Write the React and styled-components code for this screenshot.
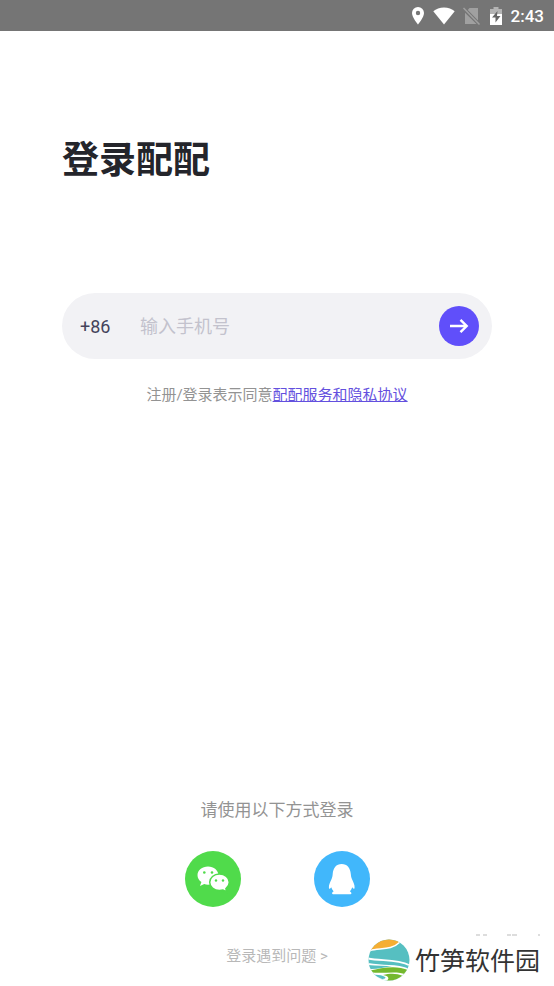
import { useState } from 'react'
import styled, { createGlobalStyle } from 'styled-components'

const GlobalStyle = createGlobalStyle`
  * {
    box-sizing: border-box;
  }
  body {
    margin: 0;
    background: #fff;
    font-family: Roboto, 'Noto Sans CJK SC', sans-serif;
  }
`

function StatusIcons() {
  return (
    <>
      <svg width='14' height='20' viewBox='0 0 14 20'>
        <path fill='#fff' fillRule='evenodd' d='M7 1a6 6 0 0 0-6 6c0 4.500 6 11.500 6 11.500S13 11.500 13 7a6 6 0 0 0-6-6zm0 8.200a2.200 2.200 0 1 1 0-4.400 2.200 2.200 0 0 1 0 4.400z' />
      </svg>
      <svg width='22' height='20' viewBox='0 0 22 20'>
        <path fill='#fff' d='M11 18.500L0.300 5.200C3 3 6.800 1.500 11 1.500s8 1.500 10.700 3.700z' />
      </svg>
      <svg width='18' height='20' viewBox='0 0 18 20'>
        <path fill='#a0a0a0' d='M6.500 2H15v12.500L4.800 4zM2 6.800L13.500 18H2z' />
        <path stroke='#a0a0a0' strokeWidth='1.500' d='M0.500 2l16 16.500' />
      </svg>
      <svg width='14' height='20' viewBox='0 0 14 20'>
        <path fill='#b4b4b4' d='M4.500 1h5v2H13v5H1V3h3.500z' />
        <path fill='#fff' d='M1 8h12v11H1z' />
        <path fill='#666' d='M8.500 5l-5.500 6.500h3.500v5l5-6.500H8z' />
      </svg>
    </>
  )
}

function ArrowIcon() {
  return (
    <svg width='20' height='16' viewBox='0 0 20 16' fill='none' stroke='#fff' strokeWidth='2.4'>
      <path d='M1 8h17M11.500 1.800L17.700 8l-6.200 6.200' />
    </svg>
  )
}

function WechatIcon() {
  return (
    <svg width='56' height='56' viewBox='0 0 56 56'>
      <path fill='#fff' d='M23 15.500c-5.900 0-10.500 3.900-10.500 8.700 0 2.800 1.500 5.200 3.900 6.800L15 35l4.200-1.900c1.200.4 2.500.6 3.800.6 5.800 0 10.500-4.100 10.500-9.200s-4.700-9-10.500-9z' />
      <path fill='#fff' stroke='#50db4b' strokeWidth='1.500' d='M34.400 23.100c-5.500 0-9.700 3.700-9.700 8.200s4.200 8.200 9.700 8.200c1.300 0 2.500-.2 3.600-.5l3.700 2-.8-3.500c2.100-1.500 3.400-3.700 3.400-6.200 0-4.500-4.400-8.200-9.900-8.200z' />
      <g fill='#50db4b'>
        <circle cx='19.300' cy='21.500' r='1.300' />
        <circle cx='27' cy='21.500' r='1.300' />
        <circle cx='31' cy='29.500' r='1.200' />
        <circle cx='38' cy='29.500' r='1.200' />
      </g>
    </svg>
  )
}

function QQIcon() {
  return (
    <svg width='56' height='56' viewBox='0 0 56 56'>
      <path fill='#fff' d='M27.700 13c-5.600 0-8.500 4-9 10-.2 2-.4 3.400-1.100 5-1.400 3-2.900 5.800-2.700 8.800.1 1.500.9 1.400 2.300-.6.6 1.700 1.400 3 2.500 4.200-1.100.4-1.600 1-1.600 1.800 0 .7.500 1 1.500 1h16.300c1 0 1.500-.3 1.500-1 0-.8-.5-1.400-1.600-1.800 1.100-1.200 1.900-2.500 2.500-4.200 1.400 2 2.200 2.100 2.300.6.200-3-1.300-5.800-2.700-8.800-.7-1.600-.9-3-1.100-5-.5-6-3.500-10-9.100-10z' />
    </svg>
  )
}

function BambooLogo() {
  return (
    <svg width='42' height='42' viewBox='0 0 42 42'>
      <defs>
        <clipPath id='disc'>
          <circle cx='21' cy='21' r='20.500' />
        </clipPath>
      </defs>
      <g clipPath='url(#disc)'>
        <path fill='#56bfc1' d='M0 0h42v42H0z' />
        <path fill='#f5ae33' stroke='#fff' strokeWidth='1.500' d='M2 11.500C11 8.500 23 12 32 3V-3H0z' />
        <path fill='none' stroke='#fff' strokeWidth='1.800' d='M0 19.500C13 22.500 28 19.500 42 26.500' />
        <path fill='#fff' d='M0 24C14 27 28 24 42 30v12H0z' />
        <path fill='#56bfc1' d='M0 26c9 1 17 .5 24 1.500-8 .5-15 3-22.500 2.500z' />
        <path fill='#74b82e' d='M2 31.500C14 29 28 25.500 41 31.500l-2 4.500C29 31 16 35 4 33.500z' />
        <path fill='#74b82e' d='M15 36c8-2 14-1.500 20 1l-4 5H18c4-2 3-5-3-6z' />
        <path fill='#56bfc1' d='M5 36c4-.5 9 0 12 2 1.500 1-1 2-3 2z' />
      </g>
    </svg>
  )
}

function App() {
  const [phone, setPhone] = useState('')

  const handleSubmit = (event) => {
    event.preventDefault()
  }

  return (
    <Page>
      <GlobalStyle />
      <StatusBar>
        <StatusIcons />
        <Clock>2:43</Clock>
      </StatusBar>
      <Main>
        <Title>登录配配</Title>
        <PhoneForm onSubmit={handleSubmit}>
          <AreaCode htmlFor='phone'>+86</AreaCode>
          <PhoneInput
            id='phone'
            type='tel'
            placeholder='输入手机号'
            value={phone}
            onChange={(event) => setPhone(event.target.value)}
          />
          <SubmitButton type='submit' aria-label='登录'>
            <ArrowIcon />
          </SubmitButton>
        </PhoneForm>
        <Terms>
          注册/登录表示同意<TermsLink href='#terms'>配配服务和隐私协议</TermsLink>
        </Terms>
      </Main>
      <Footer>
        <FooterText>请使用以下方式登录</FooterText>
        <Socials>
          <SocialButton type='button' aria-label='微信' $color='#50db4b'>
            <WechatIcon />
          </SocialButton>
          <SocialButton type='button' aria-label='QQ' $color='#41b7fb'>
            <QQIcon />
          </SocialButton>
        </Socials>
        <HelpLink href='#help'>登录遇到问题 &gt;</HelpLink>
      </Footer>
      <Watermark>
        <BambooLogo />
        <WatermarkName>竹笋软件园</WatermarkName>
        <WatermarkTicks width='64' height='2' viewBox='0 0 64 2'>
          <path stroke='#bbb' d='M0 1h4M7 1h4M31 1h4M36 1h5M62 1h2' />
        </WatermarkTicks>
      </Watermark>
    </Page>
  )
}

export default App

const Page = styled.div`
  position: relative;
  display: flex;
  flex-direction: column;
  min-height: 100vh;
`

const StatusBar = styled.header`
  display: flex;
  align-items: center;
  justify-content: flex-end;
  gap: 8px;
  height: 31px;
  padding: 0 10px;
  background: #757575;
`

const Clock = styled.span`
  color: #fff;
  font-size: 17px;
  font-weight: 500;
  line-height: 20px;
`

const Main = styled.main`
  flex: 1;
  padding: 102px 62px 0;
`

const Title = styled.h1`
  margin: 0 0 104px;
  color: #24252b;
  font-size: 37px;
  font-weight: 700;
  line-height: 56px;
`

const PhoneForm = styled.form`
  display: flex;
  align-items: center;
  height: 66px;
  padding: 0 13px 0 18px;
  border-radius: 33px;
  background: #f2f2f5;
`

const AreaCode = styled.label`
  width: 60px;
  padding-top: 2px;
  color: #45435b;
  font-size: 18px;
  line-height: 24px;
`

const PhoneInput = styled.input`
  flex: 1;
  min-width: 0;
  padding: 2px 0 0;
  border: 0;
  outline: 0;
  background: transparent;
  color: #45435b;
  font-family: inherit;
  font-size: 18px;
  line-height: 24px;

  &::placeholder {
    color: #c3c2cd;
  }
`

const SubmitButton = styled.button`
  display: flex;
  align-items: center;
  justify-content: center;
  width: 40px;
  height: 40px;
  padding: 0;
  border: 0;
  border-radius: 50%;
  background: #604ffa;
  cursor: pointer;
`

const Terms = styled.p`
  margin: 24px 0 0;
  color: #939393;
  font-size: 15px;
  line-height: 24px;
  text-align: center;
`

const TermsLink = styled.a`
  color: #6350de;
`

const Footer = styled.footer`
  display: flex;
  flex-direction: column;
  align-items: center;
  padding-bottom: 18px;
`

const FooterText = styled.p`
  margin: 0;
  color: #939393;
  font-size: 17px;
  line-height: 24px;
`

const Socials = styled.div`
  display: flex;
  gap: 73px;
  margin: 29px 0 37px;
`

const SocialButton = styled.button`
  display: flex;
  width: 56px;
  height: 56px;
  padding: 0;
  border: 0;
  border-radius: 50%;
  background: ${({ $color }) => $color};
  cursor: pointer;
`

const HelpLink = styled.a`
  color: #b8b8b8;
  font-size: 15px;
  line-height: 24px;
  text-decoration: none;
`

const Watermark = styled.div`
  position: absolute;
  right: 14px;
  bottom: 5px;
  display: flex;
  align-items: center;
  gap: 5px;
  color: #333;
  font-size: 25px;
`

const WatermarkName = styled.span`
  padding-top: 4px;
  line-height: 38px;
`

const WatermarkTicks = styled.svg`
  position: absolute;
  top: -5px;
  right: 0;
`
